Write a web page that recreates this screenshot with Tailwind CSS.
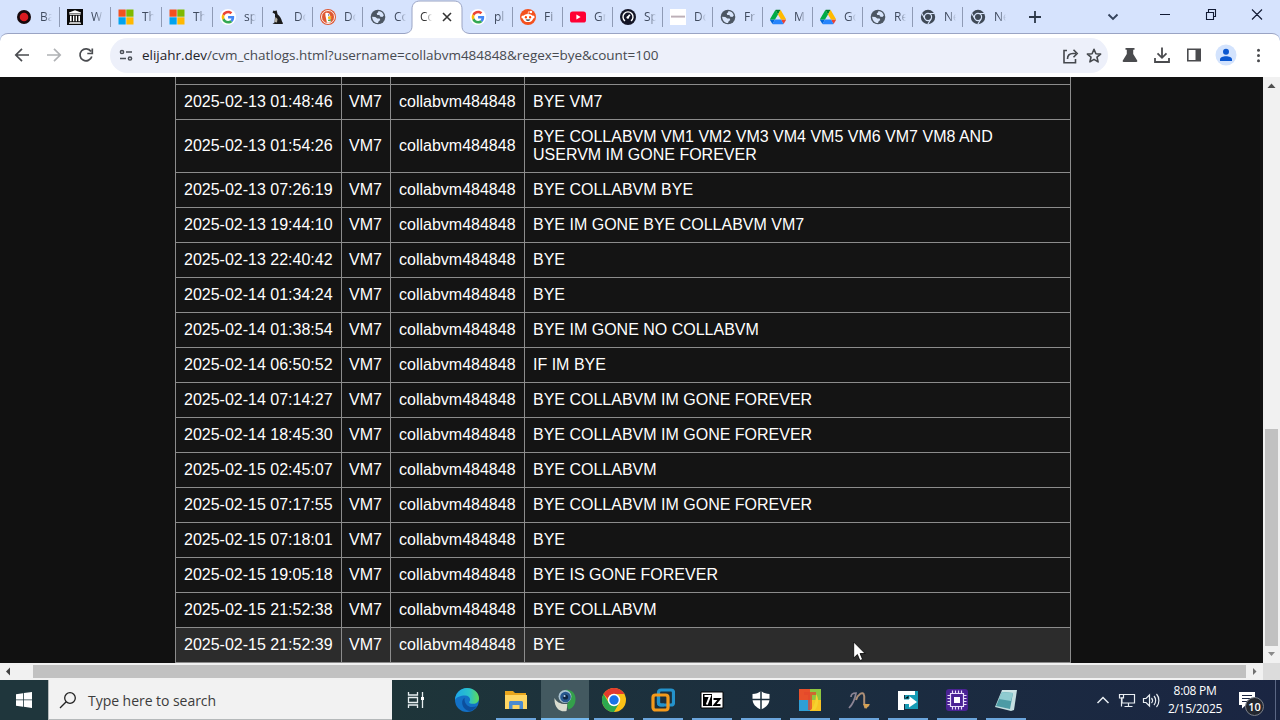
<!DOCTYPE html>
<html lang="en">
<head>
    <meta charset="UTF-8">
    <meta name="viewport" content="width=device-width, initial-scale=1.0">
    <title>elijahr.dev/cvm_chatlogs.html</title>
    <script src="https://cdn.jsdelivr.net/npm/@tailwindcss/browser@4"></script>
</head>
<body class="w-[1280px] h-[720px] overflow-hidden flex flex-col bg-[#111111] font-['Open_Sans','Noto_Sans',sans-serif]">

    <!-- icon sprite -->
    <svg class="hidden">
        <symbol id="rec" viewBox="0 0 16 16"><circle cx="8" cy="8" r="7" fill="#16080b"/><circle cx="8" cy="8" r="4.300" fill="#d91a20"/></symbol>
        <symbol id="archive" viewBox="0 0 16 16"><path fill="#0a0a0a" d="M0 0h16v16H0z"/><path fill="#fff" d="M8 1.200 14 3.400v1H2v-1zM2.500 5.200h11v.9h-11zM3 6.800h1.600v5.500H3zM6 6.800h1.300v5.500H6zM8.700 6.800H10v5.500H8.700zM11.400 6.800H13v5.500h-1.600zM2.500 12.900h11v.8h-11zM2 14.200h12v.8H2z"/></symbol>
        <symbol id="ms" viewBox="0 0 16 16"><path fill="#f3501f" d="M.5.5h7.200v7.200H.5z"/><path fill="#7fb900" d="M8.300.5h7.200v7.200H8.300z"/><path fill="#02a3ee" d="M.5 8.300h7.200v7.200H.5z"/><path fill="#ffb800" d="M8.300 8.300h7.200v7.200H8.300z"/></symbol>
        <symbol id="google" viewBox="0 0 48 48"><circle cx="24" cy="24" r="24" fill="#fff"/><g transform="translate(5 5) scale(.8)"><path fill="#ea4335" d="M24 9.500c3.540 0 6.710 1.220 9.210 3.600l6.850-6.850C35.900 2.380 30.470 0 24 0 14.620 0 6.510 5.380 2.560 13.220l7.980 6.190C12.430 13.720 17.740 9.500 24 9.500z"/><path fill="#4285f4" d="M46.980 24.550c0-1.570-.15-3.090-.38-4.550H24v9.020h12.940c-.58 2.960-2.260 5.480-4.780 7.180l7.730 6c4.510-4.180 7.090-10.360 7.090-17.650z"/><path fill="#fbbc05" d="M10.530 28.590A14.500 14.500 0 0 1 9.770 24c0-1.600.27-3.140.76-4.590l-7.980-6.190A23.900 23.900 0 0 0 0 24c0 3.880.92 7.540 2.560 10.780z"/><path fill="#34a853" d="M24 48c6.480 0 11.930-2.130 15.890-5.810l-7.730-6c-2.150 1.450-4.920 2.300-8.160 2.300-6.260 0-11.570-4.220-13.470-9.910l-7.980 6.190C6.510 42.620 14.620 48 24 48z"/></g></symbol>
        <symbol id="dog" viewBox="0 0 16 16"><path fill="#1b1b1b" d="M3.500 1.500 5 2l1.500-.8.7 2.300.3 1.700c2.300 2 4 4.500 4.500 7.300l1 1.800c0 .5-.5.7-1 .7H5.500l-3-.3 2-1.300L5 8.500 5 5 2.500 3.500z"/><path fill="#b3afa3" d="m5.500 8 2 2-.5 3.500-2.500-.5z"/></symbol>
        <symbol id="duck" viewBox="0 0 16 16"><circle cx="8" cy="8" r="8" fill="#de5833"/><circle cx="8" cy="8" r="6.500" fill="none" stroke="#fff" stroke-width=".9"/><path fill="#fff" d="M5.300 4.200c2-1.200 4.700 0 4.900 2.600l.6 6.400c-1.100.5-2.600.7-3.900.3L5.500 7z"/><path fill="#fdb913" d="M8 7.800c1.500-.5 3-.6 3.600-.1.300.8-1.600.8-2 1.300.5.400 1.500.2 2 .4-.4.900-2.700.9-3.600 0z"/><circle cx="8.700" cy="6" r=".7" fill="#2d4f8e"/><path fill="#4caf50" d="m8 10.800 2.800-.6v2.100L8 11.900z"/></symbol>
        <symbol id="globe" viewBox="0 0 16 16"><circle cx="8" cy="8" r="7.300" fill="#4d5763"/><path fill="#d8e5fb" d="M8.500 2.100c2.500.1 4.700 2 5.300 4.400l-1.500 1.600-2.300-.7-.5-1.500H7.300L6.700 4.300l1.300-.8zM2.100 7.700l3.200.4 2 1.300 2.300.2.700 1.300-1.600 1.400-.7 1.700c-3.100.2-5.700-2.500-5.900-6.300z"/></symbol>
        <symbol id="reddit" viewBox="0 0 16 16"><circle cx="8" cy="8" r="8" fill="#f4511e"/><circle cx="3" cy="8" r="1.600" fill="#fff"/><circle cx="13" cy="8" r="1.600" fill="#fff"/><ellipse cx="8" cy="9" rx="5.200" ry="4.100" fill="#fff"/><circle cx="11" cy="3" r="1.200" fill="#fff"/><path fill="none" stroke="#fff" stroke-width=".7" d="M8 5.200 8.500 2.700l2 .4"/><ellipse cx="5.900" cy="8.300" rx="1.100" ry="1.300" fill="#ff4500"/><ellipse cx="10.100" cy="8.300" rx="1.100" ry="1.300" fill="#ff4500"/><path fill="#1a2a35" d="M5.700 10.500h4.600c-.4 1.700-4.200 1.700-4.600 0z"/></symbol>
        <symbol id="youtube" viewBox="0 0 16 16"><rect y="2.500" width="16" height="11" rx="2.600" fill="#ff0033"/><path fill="#fff" d="m6.400 5.500 4.200 2.500-4.200 2.500z"/></symbol>
        <symbol id="speed" viewBox="0 0 16 16"><circle cx="8" cy="8" r="8" fill="#141526"/><path fill="none" stroke="#fff" stroke-width="1.400" d="M5 11.900a5 5 0 1 1 6 0"/><path fill="none" stroke="#fff" stroke-width="1.700" d="m7.600 8.800 2.200-3"/><circle cx="7.800" cy="8.500" r="1.300" fill="#fff"/></symbol>
        <symbol id="card" viewBox="0 0 16 16"><path fill="#fff" d="M0 0h16v16H0z"/><path stroke="#b9acb4" stroke-width="1.300" d="M1 7.300h14"/><path stroke="#d9d0d6" d="M1 8.500h14"/></symbol>
        <symbol id="drive" viewBox="0 0 87.300 78"><path fill="#0066da" d="m6.600 66.850 3.850 6.650c.8 1.400 1.950 2.500 3.300 3.300L27.500 53H0c0 1.550.4 3.100 1.200 4.500z"/><path fill="#00ac47" d="M43.650 25 29.900 1.200c-1.350.8-2.500 1.900-3.300 3.300L1.200 48.500A9 9 0 0 0 0 53h27.500z"/><path fill="#ea4335" d="M73.550 76.800c1.350-.8 2.500-1.900 3.300-3.300l1.600-2.750L86.100 57.500c.8-1.400 1.200-2.950 1.200-4.500H59.800l5.850 11.500z"/><path fill="#00832d" d="M43.650 25 57.400 1.200C56.050.4 54.500 0 52.900 0H34.400c-1.600 0-3.150.45-4.500 1.200z"/><path fill="#2684fc" d="M59.800 53H27.500L13.750 76.800c1.350.8 2.900 1.200 4.500 1.200h50.800c1.600 0 3.150-.45 4.500-1.200z"/><path fill="#ffba00" d="M73.400 26.500 60.700 4.500c-.8-1.400-1.950-2.500-3.300-3.300L43.650 25 59.800 53h27.450c0-1.550-.4-3.100-1.200-4.500z"/></symbol>
        <symbol id="chromegray" viewBox="0 0 16 16"><circle cx="8" cy="8" r="7.200" fill="#3f4956"/><circle cx="8" cy="8" r="3.600" fill="none" stroke="#d8e5fb" stroke-width="1.200"/><path stroke="#d8e5fb" stroke-width="1.100" d="M8 4.500h6.500M4.900 9.700 1.700 4.300M11 9.900l-3.200 5.400"/></symbol>
    </svg>

    <!-- tab strip -->
    <header class="relative z-10 h-[33px] shrink-0 bg-[#d6e3fd] flex items-start">
        <nav id="tabs" class="flex h-[34px] pl-[8px]"></nav>
        <svg class="w-[46px] h-[34px]" viewBox="0 0 46 34" fill="none" stroke="#2c3747" stroke-width="1.800"><path d="M17 17h12M23 11v12"/></svg>
        <svg class="ml-auto w-[222px] h-[34px]" viewBox="1058 0 222 34" fill="none"><path stroke="#35435b" stroke-width="1.900" d="m1108.500 14.500 4.500 4.500 4.500-4.500"/><path stroke="#111a33" stroke-width="1.100" d="M1160 14.500h10M1206.500 12.500h7v7h-7zM1208.500 12v-2.500h7v7h-2M1252 9.500l10 10M1262 9.500l-10 10"/></svg>
    </header>

    <!-- toolbar -->
    <div class="shrink-0 bg-[#d6e3fd]">
        <div class="h-[44px] bg-white border-t border-[#9aa4c4] rounded-t-[8px] flex items-center">
            <svg class="w-[110px] h-[43px]" viewBox="0 34 110 43" fill="none" stroke="#4a4c50" stroke-width="1.700"><path d="M29 55H16M22 48.800 15.800 55l6.200 6.200"/><path stroke="#b0b2b5" d="M47 55h13M54 48.800l6.200 6.200-6.200 6.200"/><path d="M91 51.500A6 6 0 1 0 91.800 56.500M92.300 48.500v5h-5"/></svg>
            <div class="w-[998px] h-[35px] rounded-full bg-[#edf0fa] flex items-center pl-[8px] pr-[4px]">
                <svg class="w-4 h-4" viewBox="0 0 16 16" fill="none" stroke="#4a4f57" stroke-width="1.500"><circle cx="4" cy="4" r="1.600"/><path d="M8 4h6M2 10.500h6"/><circle cx="12" cy="10.500" r="1.600"/></svg>
                <span class="ml-[8px] pb-[2px] text-[13.500px] leading-[20px] tracking-[-0.030px] text-[#474a50] whitespace-nowrap"><span class="text-[#1f2227]">elijahr.dev</span>/cvm_chatlogs.html?username=collabvm484848&amp;regex=bye&amp;count=100</span>
                <svg class="ml-auto w-[44px] h-[20px]" viewBox="1060 45 44 20" fill="none" stroke="#45484d" stroke-width="1.600"><path d="M1067 49.500h-3v12.200h11.500V58M1067.500 58c0-4 2-5.500 5.500-5.500h3M1073.500 48.700l3.700 3.800-3.700 3.800"/><path stroke-linejoin="round" d="m1094 48.300 1.900 4.400 4.700.4-3.600 3.100 1.100 4.700-4.100-2.500-4.100 2.500 1.100-4.700-3.600-3.100 4.700-.4z"/></svg>
            </div>
            <svg class="w-[172px] h-[43px]" viewBox="1108 34 172 43" fill="none"><path fill="#4a4b4e" d="M1125.500 48h9v1.800h-1.300V54l4 6.600c.4.800 0 1.400-.8 1.400h-12.800c-.8 0-1.200-.6-.8-1.400l4-6.600v-4.200h-1.300z"/><path stroke="#4a4b4e" stroke-width="1.800" d="M1162 47.500v10M1157.500 53.300l4.500 4.500 4.500-4.500M1155 58v4h14v-4"/><path stroke="#4a4b4e" stroke-width="1.600" d="M1187.800 49.300h12.400v11.400h-12.400z"/><path fill="#4a4b4e" d="M1195.500 49h5v12h-5z"/><circle cx="1226" cy="55" r="10.500" fill="#d3e3fd"/><circle cx="1226" cy="51.800" r="3" fill="#0b57d0"/><path fill="#0b57d0" d="M1220 61v-1.600c0-2 3-3.200 6-3.200s6 1.200 6 3.200V61z"/><circle cx="1258.500" cy="50.300" r="1.500" fill="#4a4b4e"/><circle cx="1258.500" cy="55.500" r="1.500" fill="#4a4b4e"/><circle cx="1258.500" cy="60.700" r="1.500" fill="#4a4b4e"/></svg>
        </div>
    </div>

    <!-- page -->
    <div class="h-[586px] shrink-0 flex">
        <main class="w-[1263px] h-[586px] overflow-hidden bg-[#111111] flex flex-col justify-end pl-[175px]">
            <table class="w-[896px] shrink-0 table-fixed border-collapse bg-[#141414] text-white text-[16px] leading-[18px] font-['Liberation_Sans',Arial,sans-serif]">
                <colgroup><col class="w-[166px]"><col class="w-[49px]"><col class="w-[134px]"><col></colgroup>
                <tbody id="logs"></tbody>
            </table>
        </main>
        <div class="w-[17px] bg-[#f1f1f1] flex flex-col items-center">
            <svg class="w-[17px] h-[17px]" viewBox="0 0 17 17"><path fill="#505050" d="m4.500 11 4-4.500 4 4.500z"/></svg>
            <div class="mt-[335px] w-[13px] h-[217px] bg-[#c1c1c1]"></div>
            <svg class="w-[17px] h-[17px]" viewBox="0 0 17 17"><path fill="#8a8a8a" d="m5 6 3.500 4L12 6z"/></svg>
        </div>
    </div>
    <div class="h-[17px] shrink-0 bg-[#f1f1f1] flex items-center">
        <svg class="w-[33px] h-[17px]" viewBox="0 0 33 17"><path fill="#404040" d="M10 4.500v8l-4-4z"/></svg>
        <div class="w-[1213px] h-[13px] bg-[#c1c1c1]"></div>
        <svg class="w-[17px] h-[17px]" viewBox="0 0 17 17"><path fill="#707070" d="M7 5v7l3.500-3.500z"/></svg>
        <div class="w-[17px] h-[17px] bg-[#dcdcdc]"></div>
    </div>

    <!-- taskbar -->
    <footer class="h-[40px] shrink-0 flex text-white bg-linear-to-r from-[#1e3539] from-30% via-[#1b2c40] via-70% to-[#1a2542]">
        <div class="w-[48px] flex items-center justify-center bg-[#1f363c]">
            <svg class="w-4 h-4" viewBox="0 0 16 16" fill="#fff"><path d="M0 2.200 7 1.200v6.300H0zM7.800 1.100 16 0v7.500H7.800zM0 8.300h7v6.400l-7-1zM7.800 8.300H16V16l-8.200-1.200z"/></svg>
        </div>
        <div class="w-[344px] bg-[#f2f2f2] border-b border-l border-[#b5b9ba] flex items-center pl-[10px]">
            <svg class="w-[18px] h-[18px]" viewBox="0 0 18 18" fill="none" stroke="#222" stroke-width="1.300"><circle cx="11" cy="7" r="5.300"/><path d="M7.200 10.800 1 17"/></svg>
            <span class="ml-[11px] pt-[2px] text-[14px] tracking-[-0.040px] text-[#3c3c3c] whitespace-nowrap">Type here to search</span>
        </div>
        <div id="apps" class="flex gap-px"></div>
        <div class="ml-auto flex items-center">
            <svg class="w-[74px] h-[40px]" viewBox="1092 680 74 40" fill="none" stroke="#e8edf2" stroke-width="1.200"><path stroke-width="1.500" d="m1097.500 703 5.500-5.500 5.500 5.500"/><path d="M1124 694.500h10.500v8.500H1122v-6M1128.500 703v3.500M1124.500 706.500h8M1119.500 694.500h4v3.500h-4zM1121.500 698v8.500"/><path d="M1143.500 698.500h2.500l3.500-3.500v11l-3.500-3.500h-2.500zM1151.500 698c1.300 1.500 1.300 3.500 0 5M1154 696c2.200 2.500 2.200 6.500 0 9M1156.500 694c3.200 3.500 3.200 9.500 0 13"/></svg>
            <div class="w-[58px] text-center text-[12px] leading-[18px] tracking-[-0.300px] whitespace-nowrap">
                <div>8:08 PM</div>
                <div>2/15/2025</div>
            </div>
            <div class="relative w-[51px] h-[40px] ml-[5px]">
                <svg class="w-[51px] h-[40px]" viewBox="1229 680 51 40"><path fill="#fff" d="M1239 692h16v13h-9l-4 3.500V705h-3z"/><path stroke="#1a2542" stroke-width="1.200" d="M1242 695.500h10M1242 698.500h10M1242 701.500h7"/><circle cx="1254.500" cy="706.500" r="9" fill="#23272f" stroke="#7b8089"/><path stroke="#5b6784" d="M1275.500 680v40"/></svg>
                <span class="absolute left-[17px] top-[19px] w-[17px] text-center text-[11px] leading-[15px] font-semibold">10</span>
            </div>
        </div>
    </footer>

    <!-- mouse pointer -->
    <svg class="absolute left-[853px] top-[641px] w-[13px] h-[21px]" viewBox="0 0 13 21"><path fill="#fff" stroke="#000" stroke-width=".8" d="M.7 1v16l3.700-3.500 2.500 6 2.700-1.100-2.500-5.900h5z"/></svg>

    <!-- taskbar app icons, in order -->
    <template id="appIcons">
        <svg viewBox="0 0 24 24" fill="none" stroke="#e6edef" stroke-width="1.300"><path d="M4.500 4v3h9V4M4.500 20v-3h9v3M4.500 9.500h9v5h-9zM18.500 4v16"/><path fill="#fff" stroke="none" d="M17 9h3v3h-3z"/></svg>
        <svg viewBox="0 0 24 24"><defs><linearGradient id="eg" x1="0" y1="0" x2="1" y2="0"><stop stop-color="#1ca6e8"/><stop offset=".6" stop-color="#2bc3c8"/><stop offset="1" stop-color="#5fdc55"/></linearGradient></defs><circle cx="12" cy="12" r="12" fill="#1371c6"/><path fill="url(#eg)" d="M0 12C.3 5 5.500 0 12 0s12 4.700 12 10.200c0 3.500-2.600 5.600-5.600 5.600-2.500 0-4.300-.7-4.300-1.600 0-.7 1-1.100 1-2.800 0-2-2-4-5.100-4C5.500 7.400 1.500 9 0 12z"/><path fill="#0c4f9e" d="M9.700 9.800c-1.900 1.200-2.700 3.200-2.500 5.400.3 4 3.600 7.500 7.600 7.900 3-.8 5.600-2.700 7.200-5.200-2 1-4.300 1.500-6.500 1-4-.8-6.700-5-5.800-9.100z"/></svg>
        <svg viewBox="0 0 24 24"><path fill="#e9a51c" d="M1 3h8l2 2h11v16H1z"/><path fill="#ffd663" d="M1 7h22v14H1z"/><path fill="#4c8bd0" d="M5 21v-6.500c0-1 .7-1.500 1.500-1.500h11c.8 0 1.500.6 1.500 1.500V21h-3.500v-4h-7v4z"/></svg>
        <svg viewBox="0 0 24 24"><path fill="#d9dccf" d="M1.500 10c2 4 6 6.500 13 6l-1 7C7 24.500 1 20 1.500 10z"/><path fill="#34a04b" d="M12 2c6-1 10.500 3 10.500 9 0 5-2 9-7 10.500-1-2-2-5 0-7.500z"/><circle cx="12" cy="8.500" r="6.500" fill="#a9c2d0"/><circle cx="12.500" cy="9" r="5.300" fill="#285890"/><circle cx="12.500" cy="9" r="2.600" fill="#102644"/><circle cx="11.500" cy="8" r="1.100" fill="#b4d3ef"/></svg>
        <svg viewBox="0 0 24 24"><circle cx="12" cy="12" r="12" fill="#fbc116"/><path fill="#2da94f" d="M1.600 6A12 12 0 0 0 12 24l5.200-9H6.800z"/><path fill="#e33b2e" d="M1.600 6A12 12 0 0 1 22.400 6H12c-3 0-5.300 2-5.300 6z"/><circle cx="12" cy="12" r="6.200" fill="#fff"/><circle cx="12" cy="12" r="4.700" fill="#1a73e8"/></svg>
        <svg viewBox="0 0 24 24" fill="none" stroke-width="3.200"><rect x="7.500" y="2" width="15" height="15" rx="2.500" stroke="#2492cb"/><rect x="2" y="7" width="15" height="15" rx="2.500" stroke="#f59a1b"/><path stroke="#2492cb" d="M7.500 9v5.500c0 1.500 1 2.500 2.500 2.500h3"/></svg>
        <svg viewBox="0 0 24 24"><path fill="#fff" stroke="#000" d="M1 4h22v16H1z"/><path fill="#000" d="M3 6h9v12H3z"/><path fill="none" stroke="#fff" stroke-width="2" d="M4.500 8h5.500L6.800 16.500"/><path fill="none" stroke="#000" stroke-width="2" d="M13.500 11h6l-5 6h6"/></svg>
        <svg viewBox="0 0 24 24"><path fill="#fff" d="M12 3c2.500 2 5 2.800 8.500 3v5c0 5-3.500 8.500-8.500 10.500C7 19.500 3.500 16 3.500 11V6C7 5.800 9.500 5 12 3z"/><path stroke="#1c2f3d" stroke-width="1.500" d="M12 3v19M3 11.500h18"/></svg>
        <svg viewBox="0 0 24 24"><path fill="#e8502b" d="M1 1h11v11H1z"/><path fill="#8fc740" d="M12 1h11v11H12z"/><path fill="#2f9fd6" d="M1 12h11v11H1z"/><path fill="#f7c324" d="M12 12h11v11H12z"/><path fill="#e4472c" d="M6 4h12v3h-4v15h-4V7H6z" opacity=".75"/><path fill="#f6d22e" d="M18 6c3 4 3 11-1 16h-4c4-5 5-10 5-16z"/></svg>
        <svg viewBox="0 0 24 24" fill="none"><path stroke="#8b8494" stroke-width="1.700" d="M2 20c3-3 6-9 7-15-4 0-5 2-5 4"/><path stroke="#ad8f77" stroke-width="2" d="M9 12c2-6 7-9 8-5 1 3-1 7 1 12l4-2"/><path fill="#d5a253" d="m16 16 7 0-4 5z"/></svg>
        <svg viewBox="0 0 24 24"><path fill="#169bb5" d="M9 3h13v18H9z"/><path fill="#fff" d="M2 3h17v4H8v4h5V8l8 6-8 5.500V16H8v6H2z"/><path stroke="#169bb5" d="M13 7.500v3.500H8"/></svg>
        <svg viewBox="0 0 24 24"><rect x="1" y="1" width="22" height="22" rx="3" fill="#4b2395"/><path fill="none" stroke="#e9e0fa" stroke-width="1.200" d="M5.500 5.500h13v13h-13zM7.500 2.500v3M10.500 2.500v3M13.500 2.500v3M16.500 2.500v3M7.500 18.500v3M10.500 18.500v3M13.500 18.500v3M16.500 18.500v3M2.500 7.500h3M2.500 10.500h3M2.500 13.500h3M2.500 16.500h3M18.500 7.500h3M18.500 10.500h3M18.500 13.500h3M18.500 16.500h3"/><path fill="#fff" d="M9 9h6v6H9z"/></svg>
        <svg viewBox="0 0 24 24"><path fill="#c5dfe1" d="M8 2h15l-3 20-3 1L1 19z"/><path fill="#4d9ba5" d="m8 4 11 1-3 16-14-3z"/><path fill="#8fcbd0" d="m8 4 11 1-2 8L5 11z"/><path stroke="#eaf4f4" d="M8.500 3h13" stroke-dasharray="1 1"/></svg>
    </template>

    <script>
        const tabs = [
            ['rec', 'Ba'], ['archive', 'W'], ['ms', 'Th'], ['ms', 'Th'], ['google', 'sp'], ['dog', 'Do'], ['duck', 'Do'], ['globe', 'Co'],
            null,
            ['google', 'pl'], ['reddit', 'Fi'], ['youtube', 'Gr'], ['speed', 'Sp'], ['card', 'Do'], ['globe', 'Fr'], ['drive', 'M'], ['drive', 'Go'], ['globe', 'Re'], ['chromegray', 'Ne'], ['chromegray', 'Ne'],
        ];

        document.getElementById('tabs').innerHTML = tabs.map((t, i) => {
            if (!t) {
                return `<div class="relative z-10 w-[50px] h-[34px] pt-px"><svg class="absolute -left-[7px] top-0 w-[64px] h-[35px]" viewBox="0 0 64 35"><path fill="#fff" stroke="#9aa4c4" d="M-2 33.500C4 33.500 7 31 7 26V9c0-5 3-8 8-8h34c5 0 8 3 8 8v17c0 5 3 7.500 9 7.500V36H-2z"/></svg>
                    <div class="relative flex items-center h-[32px] pl-[8px]"><span class="w-[12px] overflow-hidden text-[12px] text-[#333] mask-r-from-40%">Co</span><svg class="ml-[9px] w-3 h-3" viewBox="0 0 12 12" stroke="#333" stroke-width="1.600"><path d="m2 2 8 8M10 2l-8 8"/></svg></div></div>`;
            }
            const width = i < 4 ? 'w-[51px]' : 'w-[50px]';
            const line = i === 7 || i === tabs.length - 1 ? '' : '<i class="ml-auto -mr-px w-px h-[20px] bg-[#8f9bb5]"></i>';
            return `<div class="${width} h-[34px] flex items-center pl-[8px]"><svg class="w-4 h-4 shrink-0"><use href="#${t[0]}"/></svg><span class="ml-[8px] w-[12px] overflow-hidden whitespace-nowrap text-[12px] text-[#3f4a5e] mask-r-from-40%">${t[1]}</span>${line}</div>`;
        }).join('');

        const logs = [
            ['2025-02-13 01:48:40', 'BYE'],
            ['2025-02-13 01:48:46', 'BYE VM7'],
            ['2025-02-13 01:54:26', 'BYE COLLABVM VM1 VM2 VM3 VM4 VM5 VM6 VM7 VM8 AND<br>USERVM IM GONE FOREVER'],
            ['2025-02-13 07:26:19', 'BYE COLLABVM BYE'],
            ['2025-02-13 19:44:10', 'BYE IM GONE BYE COLLABVM VM7'],
            ['2025-02-13 22:40:42', 'BYE'],
            ['2025-02-14 01:34:24', 'BYE'],
            ['2025-02-14 01:38:54', 'BYE IM GONE NO COLLABVM'],
            ['2025-02-14 06:50:52', 'IF IM BYE'],
            ['2025-02-14 07:14:27', 'BYE COLLABVM IM GONE FOREVER'],
            ['2025-02-14 18:45:30', 'BYE COLLABVM IM GONE FOREVER'],
            ['2025-02-15 02:45:07', 'BYE COLLABVM'],
            ['2025-02-15 07:17:55', 'BYE COLLABVM IM GONE FOREVER'],
            ['2025-02-15 07:18:01', 'BYE'],
            ['2025-02-15 19:05:18', 'BYE IS GONE FOREVER'],
            ['2025-02-15 21:52:38', 'BYE COLLABVM'],
            ['2025-02-15 21:52:39', 'BYE'],
        ];

        const cell = text => `<td class="border border-[#8c8c8c] p-2 whitespace-nowrap">${text}</td>`;
        const vmCell = '<td class="border border-[#8c8c8c] py-2 pl-[7px] whitespace-nowrap">VM7</td>';
        document.getElementById('logs').innerHTML = logs.map(([time, msg], i) =>
            `<tr class="${i === logs.length - 1 ? 'bg-[#2c2c2c]' : ''}">${cell(time)}${vmCell}${cell('collabvm484848')}${cell(msg)}</tr>`
        ).join('');

        // index 0 and 1 are not running, index 3 is focused
        const apps = document.getElementById('apps');
        [...document.getElementById('appIcons').content.children].forEach((icon, i) => {
            const box = document.createElement('div');
            box.className = 'relative w-[48px] flex items-center justify-center';
            if (i === 0) box.classList.add('mr-[2px]');
            if (i === 3) box.classList.add('bg-[#435960]');
            icon.setAttribute('class', 'w-6 h-6');
            box.append(icon);
            if (i > 1) {
                const bar = document.createElement('i');
                bar.className = i === 3 ? 'absolute bottom-0 inset-x-0 h-[2px] bg-[#76b9ed]' : 'absolute bottom-0 inset-x-[4px] h-[2px] bg-[#6ba5dc]';
                box.append(bar);
            }
            apps.append(box);
        });
    </script>
</body>
</html>
